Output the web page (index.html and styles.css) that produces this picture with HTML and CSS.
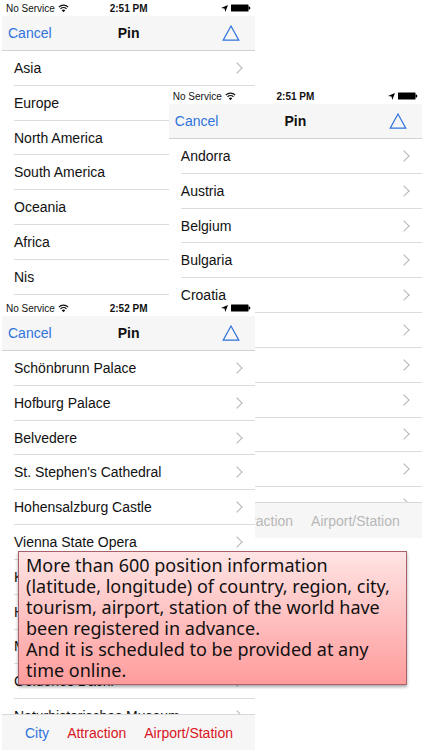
FILE: index.html
```html
<!DOCTYPE html>
<html lang="en">
<head>
  <meta charset="UTF-8">
  <meta name="viewport" content="width=device-width, initial-scale=1.0">
  <title>Pin</title>
  <link rel="stylesheet" href="styles.css">
</head>
<body>
  <svg class="defs" aria-hidden="true">
    <symbol id="wifi" viewBox="0 0 20 16">
      <path d="M1.5 5.5a12 12 0 0 1 17 0M4.5 8.7a7.8 7.8 0 0 1 11 0" fill="none" stroke="#111" stroke-width="2.2"/>
      <path d="M6.8 11.3a4.5 4.5 0 0 1 6.4 0L10 14.8z" fill="#111"/>
    </symbol>
    <symbol id="location" viewBox="0 0 12 12">
      <path d="M12 0L7.4 12L6 6.2L0 5.2z" fill="#000"/>
    </symbol>
    <symbol id="battery" viewBox="0 0 20 8">
      <rect x="0" y="0.5" width="17.5" height="7" rx="0.5" fill="#000"/>
      <path d="M17.5 2.5h0.8a1 1.5 0 0 1 0 3h-0.8z" fill="#000"/>
    </symbol>
    <symbol id="triangle" viewBox="0 0 18 16">
      <path d="M9 1L16.8 15.2H1.2z" fill="none" stroke="#2f73dc" stroke-width="1.2"/>
    </symbol>
  </svg>

  <main class="stage">
    <section class="phone phone-region">
      <div class="status">
        <span class="carrier">No Service <svg class="wifi"><use href="#wifi"/></svg></span>
        <span class="time">2:51 PM</span>
        <span class="power"><svg class="location"><use href="#location"/></svg><svg class="battery"><use href="#battery"/></svg></span>
      </div>
      <header class="nav">
        <button class="cancel">Cancel</button>
        <h1>Pin</h1>
        <button class="up" aria-label="Up"><svg><use href="#triangle"/></svg></button>
      </header>
      <div class="scroll">
        <ul class="list">
          <li><button>Asia</button></li>
          <li><button>Europe</button></li>
          <li><button>North America</button></li>
          <li><button>South America</button></li>
          <li><button>Oceania</button></li>
          <li><button>Africa</button></li>
          <li><button>Nis</button></li>
          <li class="empty"></li>
          <li class="empty"></li>
          <li class="empty"></li>
          <li class="empty"></li>
        </ul>
      </div>
    </section>

    <section class="phone phone-country">
      <div class="status">
        <span class="carrier">No Service <svg class="wifi"><use href="#wifi"/></svg></span>
        <span class="time">2:51 PM</span>
        <span class="power"><svg class="location"><use href="#location"/></svg><svg class="battery"><use href="#battery"/></svg></span>
      </div>
      <header class="nav">
        <button class="cancel">Cancel</button>
        <h1>Pin</h1>
        <button class="up" aria-label="Up"><svg><use href="#triangle"/></svg></button>
      </header>
      <div class="scroll">
        <ul class="list">
          <li><button>Andorra</button></li>
          <li><button>Austria</button></li>
          <li><button>Belgium</button></li>
          <li><button>Bulgaria</button></li>
          <li><button>Croatia</button></li>
          <li><button aria-label="Cyprus"></button></li>
          <li><button aria-label="Czech Republic"></button></li>
          <li><button aria-label="Denmark"></button></li>
          <li><button aria-label="Estonia"></button></li>
          <li><button aria-label="Finland"></button></li>
          <li><button aria-label="France"></button></li>
        </ul>
      </div>
      <footer class="toolbar">
        <button disabled>City</button>
        <button disabled>Attraction</button>
        <button disabled>Airport/Station</button>
      </footer>
    </section>

    <section class="phone phone-place">
      <div class="status">
        <span class="carrier">No Service <svg class="wifi"><use href="#wifi"/></svg></span>
        <span class="time">2:52 PM</span>
        <span class="power"><svg class="location"><use href="#location"/></svg><svg class="battery"><use href="#battery"/></svg></span>
      </div>
      <header class="nav">
        <button class="cancel">Cancel</button>
        <h1>Pin</h1>
        <button class="up" aria-label="Up"><svg><use href="#triangle"/></svg></button>
      </header>
      <div class="scroll">
        <ul class="list">
          <li><button>Schönbrunn Palace</button></li>
          <li><button>Hofburg Palace</button></li>
          <li><button>Belvedere</button></li>
          <li><button>St. Stephen's Cathedral</button></li>
          <li><button>Hohensalzburg Castle</button></li>
          <li><button>Vienna State Opera</button></li>
          <li><button>Karlskirche</button></li>
          <li><button>Hundertwasserhaus</button></li>
          <li><button>Mirabell Palace</button></li>
          <li><button>Goldenes Dachl</button></li>
          <li><button>Naturhistorisches Museum</button></li>
        </ul>
      </div>
      <footer class="toolbar">
        <button class="current">City</button>
        <button>Attraction</button>
        <button>Airport/Station</button>
      </footer>
    </section>

    <p class="callout">More than 600 position information<br>
      (latitude, longitude) of country, region, city,<br>
      tourism, airport, station of the world have<br>
      been registered in advance.<br>
      And it is scheduled to be provided at any<br>
      time online.</p>
  </main>
</body>
</html>
```
FILE: styles.css
```css
* {
  box-sizing: border-box;
}
body {
  margin: 0;
  background: #fff;
  color: #111;
  font-family: "Liberation Sans", Arial, sans-serif;
  font-size: 14px;
}
button {
  margin: 0;
  padding: 0;
  border: none;
  background: none;
  color: inherit;
  font: inherit;
  cursor: pointer;
}
.defs {
  position: absolute;
  width: 0;
  height: 0;
}
.stage {
  position: relative;
  min-height: 750px;
  overflow: hidden;
}

/* overlapping phone screens */
.phone {
  position: absolute;
  display: flex;
  flex-direction: column;
  width: 60%;
  height: 450px;
  background: #fff;
}
.phone-region {
  top: 0;
  left: 2px;
}
.phone-country {
  top: 88px;
  right: 0;
}
.phone-place {
  top: 300px;
  left: 2px;
}

.status,
.nav {
  display: grid;
  grid-template-columns: 1fr auto 1fr;
  align-items: center;
}
.status {
  height: 16px;
  padding: 0 4px;
  font-size: 10px;
}
.carrier,
.power {
  display: flex;
  align-items: center;
  gap: 3px;
}
.power {
  justify-content: flex-end;
}
.time {
  font-weight: bold;
}
.wifi {
  width: 11px;
  height: 9px;
}
.location {
  width: 7px;
  height: 7px;
}
.battery {
  width: 20px;
  height: 8px;
}
.nav {
  height: 35px;
  padding: 0 15px 0 6px;
  background: #f6f6f6;
  border-bottom: 1px solid #d2d2d2;
}
.nav h1 {
  margin: 0;
  padding-left: 9px;
  font-size: 14px;
}
.cancel {
  justify-self: start;
  color: #2f73dc;
}
.up {
  justify-self: end;
  line-height: 0;
}
.up svg {
  width: 18px;
  height: 16px;
}

.scroll {
  flex: 1;
  min-height: 0;
  overflow: hidden;
}
.list {
  display: grid;
  grid-auto-rows: 1fr;
  height: 383px;
  margin: 0;
  padding: 0 0 0 12px;
  list-style: none;
}
.list li {
  display: flex;
  align-items: center;
  padding-right: 14px;
  border-bottom: 1px solid #dcdcdc;
}
.list button {
  flex: 1;
  text-align: left;
}
.list li::after {
  content: "";
  width: 7px;
  height: 7px;
  border: solid #b4b4ba;
  border-width: 1px 1px 0 0;
  transform: rotate(45deg);
}
.list .empty::after {
  display: none;
}

.toolbar {
  display: flex;
  align-items: center;
  gap: 18px;
  height: 36px;
  padding-left: 23px;
  background: #f6f6f6;
  border-top: 1px solid #d8d8d8;
  color: #d9141e;
}
.toolbar .current {
  color: #2f73dc;
}
.toolbar button:disabled {
  color: #b8b8b8;
}

.callout {
  position: absolute;
  top: 551px;
  left: 18px;
  right: 15px;
  margin: 0;
  padding: 3px 7px;
  border: 1px solid #a8606a;
  background: linear-gradient(#ffe4e4, #ff9c9c);
  box-shadow: 0 2px 3px rgba(0, 0, 0, 0.35);
  font-family: "Noto Sans", sans-serif;
  font-size: 18px;
  line-height: 21px;
}
```
